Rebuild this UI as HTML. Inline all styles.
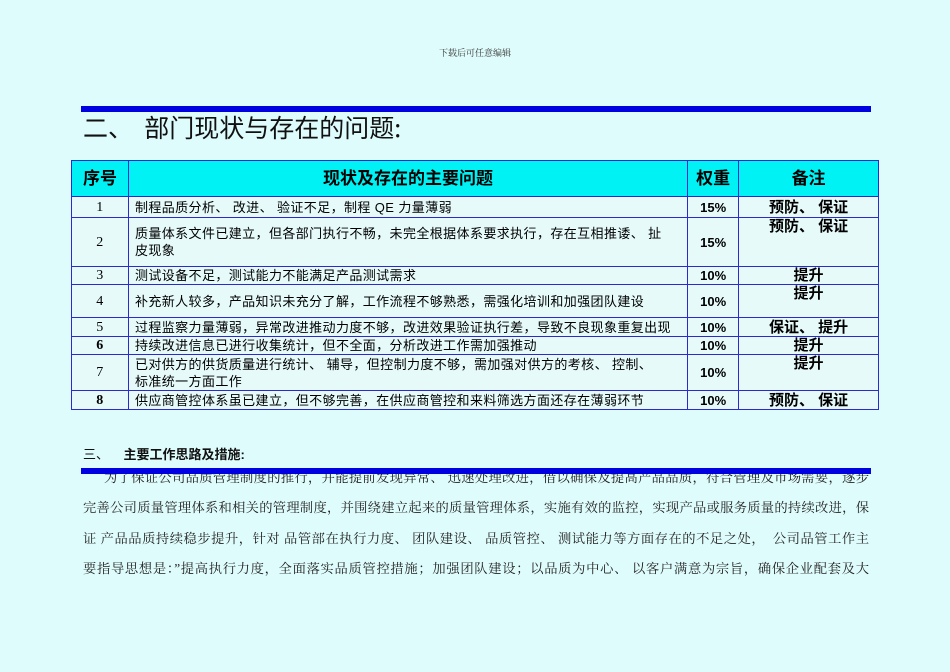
<!DOCTYPE html>
<html><head><meta charset="utf-8"><style>
*{margin:0;padding:0;box-sizing:border-box}
body{width:950px;height:672px;background:#dffcfc;position:relative;overflow:hidden;font-family:"Liberation Sans","Noto Sans CJK SC",sans-serif;color:#000}
.a{position:absolute}
.bar{position:absolute;left:81px;width:790px;height:6px;background:#0000e0}
table{position:absolute;left:71px;top:160px;width:808px;border-collapse:collapse;font-size:13px}
td{border:1px solid #2a2ad0;padding:0 6px;background:#e6fafa;vertical-align:middle;line-height:17px;letter-spacing:0.4px}
tr.h td{background:#00f2f5;font-size:17px;font-weight:bold;text-align:center;height:36px;letter-spacing:0}
td.c{text-align:center;font-family:"Liberation Serif","Noto Serif CJK SC",serif;font-size:14px}
td.w{text-align:center;font-weight:bold;font-size:13px;letter-spacing:0}
td.n{text-align:center;font-weight:bold;font-size:15px;letter-spacing:0}
td.t{vertical-align:top}
.p{position:absolute;left:83px;width:786px;font-family:"Liberation Serif","Noto Serif CJK SC",serif;font-size:13.3px;color:#222;text-align:justify;text-align-last:justify;white-space:nowrap;line-height:20px}
</style></head><body>
<div class="a" style="left:0;width:950px;top:46px;text-align:center;font-size:9px;color:#333;font-family:'Noto Serif CJK SC',serif">下载后可任意编辑</div>
<div class="bar" style="top:106px"></div>
<div class="a" style="left:83px;top:109px;font-size:25px;color:#111;font-family:'Noto Sans CJK SC',sans-serif">二、&nbsp;&nbsp;部门现状与存在的问题:</div>
<table>
<col style="width:57px"><col style="width:560px"><col style="width:51px"><col style="width:140px">
<tr class="h"><td>序号</td><td>现状及存在的主要问题</td><td>权重</td><td>备注</td></tr>
<tr style="height:21px"><td class="c">1</td><td>制程品质分析、 改进、 验证不足，制程 QE 力量薄弱</td><td class="w">15%</td><td class="n">预防、 保证</td></tr>
<tr style="height:49px"><td class="c">2</td><td>质量体系文件已建立，但各部门执行不畅，未完全根据体系要求执行，存在互相推诿、 扯<br>皮现象</td><td class="w">15%</td><td class="n t">预防、 保证</td></tr>
<tr style="height:18px"><td class="c">3</td><td>测试设备不足，测试能力不能满足产品测试需求</td><td class="w">10%</td><td class="n">提升</td></tr>
<tr style="height:33px"><td class="c">4</td><td>补充新人较多，产品知识未充分了解，工作流程不够熟悉，需强化培训和加强团队建设</td><td class="w">10%</td><td class="n t">提升</td></tr>
<tr style="height:19px"><td class="c">5</td><td>过程监察力量薄弱，异常改进推动力度不够，改进效果验证执行差，导致不良现象重复出现</td><td class="w">10%</td><td class="n">保证、 提升</td></tr>
<tr style="height:18px"><td class="c" style="font-weight:bold">6</td><td>持续改进信息已进行收集统计，但不全面，分析改进工作需加强推动</td><td class="w">10%</td><td class="n">提升</td></tr>
<tr style="height:36px"><td class="c">7</td><td>已对供方的供货质量进行统计、 辅导，但控制力度不够，需加强对供方的考核、 控制、<br>标准统一方面工作</td><td class="w">10%</td><td class="n t">提升</td></tr>
<tr style="height:19px"><td class="c" style="font-weight:bold">8</td><td>供应商管控体系虽已建立，但不够完善，在供应商管控和来料筛选方面还存在薄弱环节</td><td class="w">10%</td><td class="n">预防、 保证</td></tr>
</table>
<div class="a" style="left:83px;top:444px;font-size:13px;color:#111">三、&nbsp;&nbsp;&nbsp;&nbsp;<b>主要工作思路及措施:</b></div>
<div class="p" style="top:468px;left:104px;width:765px">为了保证公司品质管理制度的推行，并能提前发现异常、 迅速处理改进，借以确保及提高产品品质，符合管理及市场需要，逐步</div>
<div class="bar" style="top:468px"></div>
<div class="p" style="top:498px">完善公司质量管理体系和相关的管理制度，并围绕建立起来的质量管理体系，实施有效的监控，实现产品或服务质量的持续改进，保</div>
<div class="p" style="top:529px">证 产品品质持续稳步提升，针对 品管部在执行力度、 团队建设、 品质管控、 测试能力等方面存在的不足之处，&nbsp;&nbsp;公司品管工作主</div>
<div class="p" style="top:559px">要指导思想是：”提高执行力度，全面落实品质管控措施；加强团队建设；以品质为中心、 以客户满意为宗旨，确保企业配套及大</div>
</body></html>
